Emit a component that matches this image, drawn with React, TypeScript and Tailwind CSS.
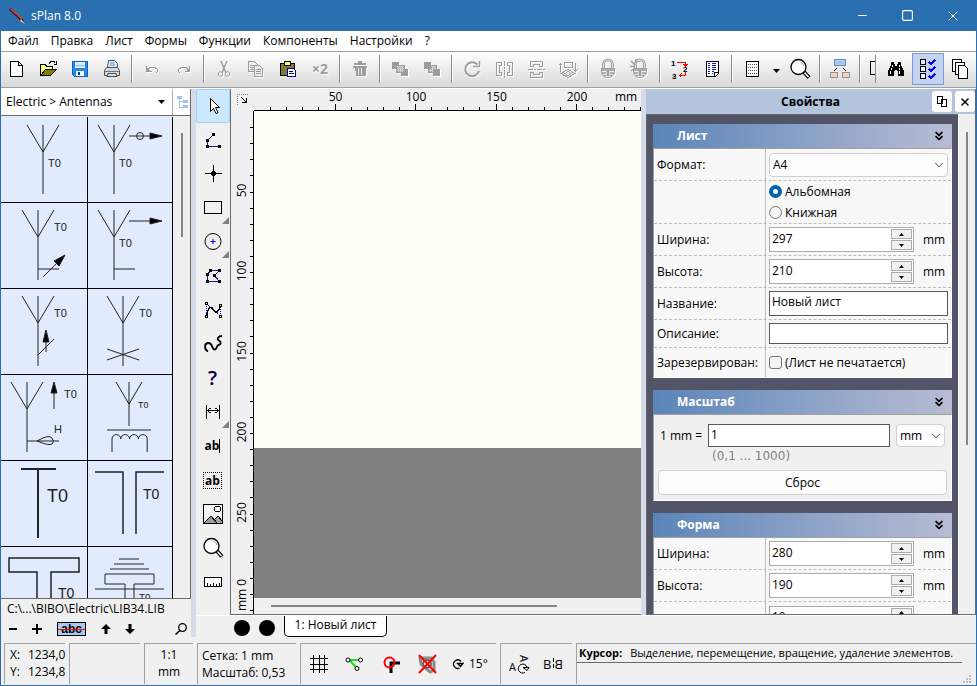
import React from 'react';
import clsx from 'clsx';
import { ChevronDown, ChevronsDown, Minus, Square, X } from 'lucide-react';

interface IconProps {
  children: React.ReactNode;
  disabled?: boolean;
  smooth?: boolean;
}

const Icon = ({ children, disabled, smooth }: IconProps) => (
  <svg
    width="24"
    height="24"
    viewBox="0 0 24 24"
    fill="none"
    stroke="currentColor"
    shapeRendering={smooth ? 'auto' : 'crispEdges'}
    className={clsx('shrink-0', disabled ? 'text-[#9c9c9c] drop-shadow-[1px_1px_0_#ffffff]' : 'text-black')}
  >
    {children}
  </svg>
);

const MagnifierIcon = () => (
  <Icon smooth>
    <path d="M16 15l5 5.500" strokeWidth="4" />
    <path d="M16.500 15.500l4 4.500" stroke="#fff" strokeWidth="1.500" />
    <circle cx="10.500" cy="10" r="7.500" fill="#fff" strokeWidth="1.300" />
    <path d="M12.500 5.500c2 .5 3 1.500 3 3.500" stroke="#999" />
  </Icon>
);

interface Tool {
  name: string;
  icon?: React.ReactNode;
  active?: boolean;
  narrow?: boolean;
  more?: boolean;
}

const lockBody = (
  <>
    <path d="M7.500 12V7.500a4.500 4.500 0 0 1 9 0V12" strokeWidth="3" />
    <path d="M7.500 12V7.500a4.500 4.500 0 0 1 9 0V12" stroke="#eee" />
    <path d="M5.500 11.500h13v4a6.500 5 0 0 1-13 0z" fill="#eee" />
    <path d="M6 13h12M6 16h4M14 16h4M8 18.500h2M14 18.500h2" strokeWidth="1.500" />
    <path d="M12 13v6" strokeWidth="2.500" />
  </>
);

const toolGroups: Tool[][] = [
  [
    { name: 'Новый', icon: <Icon><path d="M6.500 4.500h8l4 4v11h-12zM14.500 4.500v4h4" fill="#fff" /></Icon> },
    {
      name: 'Открыть',
      icon: (
        <Icon>
          <path d="M4.500 18.500v-11h5l1 2h6v3" fill="#ffff80" />
          <path d="M4.500 18.500l5-6h11l-6 6z" fill="#808000" />
          <path d="M13 6.500l2-2h3l1.500 2M20.500 4v3h-3" />
        </Icon>
      ),
    },
    {
      name: 'Сохранить',
      icon: (
        <Icon>
          <path d="M4.500 4.500h15v15h-13l-2-2z" fill="#1e88e5" stroke="#0b62c4" />
          <path d="M7 5h10v6H7z" fill="#dbeafe" stroke="none" />
          <path d="M7 8.500h10" stroke="#8fbde9" />
          <path d="M8 14h8v5H8z" fill="#fff" stroke="none" />
          <path d="M10 15h2v3h-2z" fill="#0b3c9b" stroke="none" />
        </Icon>
      ),
    },
    {
      name: 'Печать',
      icon: (
        <Icon smooth>
          <path d="M7.500 10.500l1-7h6l3 3v4" fill="#cfe6fb" stroke="#555" />
          <path d="M10 6h4M10 8h5" stroke="#5aa0dc" />
          <path d="M4.500 18.500v-5l2-3h11l2 3v5z" fill="#d9d9d9" stroke="#555" />
          <path d="M5 14.500h14" stroke="#777" />
          <path d="M8 16.500h8l1 3H7z" fill="#cfe6fb" stroke="#444" />
        </Icon>
      ),
    },
  ],
  [
    {
      name: 'Отменить',
      icon: <Icon disabled><path d="M6.500 9v5h5M7 13.500l3-3h5l2.500 2v2l-1.500 1.500" /><path d="M6 10v4h4z" fill="currentColor" stroke="none" /></Icon>,
    },
    {
      name: 'Вернуть',
      icon: (
        <Icon disabled>
          <path d="M17.500 9v5h-5M17 13.500l-3-3H9l-2.500 2v2L8 16" />
          <path d="M18 10v4h-4z" fill="currentColor" stroke="none" />
        </Icon>
      ),
    },
  ],
  [
    {
      name: 'Вырезать',
      icon: (
        <Icon disabled smooth>
          <path d="M9 4l5 12M15 4l-5 12" strokeWidth="1.500" />
          <circle cx="8.500" cy="17" r="2.300" />
          <circle cx="15.500" cy="17" r="2.300" />
        </Icon>
      ),
    },
    {
      name: 'Копировать',
      icon: (
        <Icon disabled>
          <path d="M4.500 4.500h6l3 3v7h-9z" fill="#eee" />
          <path d="M6 8.500h5M6 10.500h5M6 12.500h5" />
          <path d="M10.500 8.500h5l3 3v8h-8z" fill="#eee" />
          <path d="M12 12.500h5M12 14.500h5M12 16.500h5" />
        </Icon>
      ),
    },
    {
      name: 'Вставить',
      icon: (
        <Icon>
          <path d="M4.500 6.500h14v12h-14z" fill="#7d7b35" />
          <path d="M8.500 4.500h6v4h-6z" fill="#ffff66" />
          <path d="M11.500 11.500h6l2 2v6h-8z" fill="#fff" stroke="#000080" />
          <path d="M13 14.500h4M13 16.500h5" stroke="#000080" />
        </Icon>
      ),
    },
    {
      name: 'Дублировать',
      icon: <span className="text-[14px] font-bold text-[#9c9c9c] [text-shadow:1px_1px_0_#fff]">×2</span>,
    },
  ],
  [
    {
      name: 'Удалить',
      icon: (
        <Icon disabled>
          <path d="M10 4.500h4M6 6.500h12" strokeWidth="2" />
          <path d="M7 9h11v10H8z" fill="currentColor" stroke="none" />
          <path d="M10.500 10v8M13.500 10v8" stroke="#eee" />
          <path d="M5 9.500h14" strokeWidth="2" />
        </Icon>
      ),
    },
  ],
  [
    {
      name: 'На передний план',
      icon: (
        <Icon disabled>
          <path d="M4 5h7v7H4zM13 12h7v7h-7z" fill="currentColor" stroke="none" />
          <path d="M8.500 8.500h8v7h-8z" fill="#d4d4d4" />
          <path d="M9 10.500h7M9 12.500h7M9 14.500h7" strokeDasharray="1 1" />
        </Icon>
      ),
    },
    {
      name: 'На задний план',
      icon: (
        <Icon disabled>
          <path d="M8.500 8.500h8v7h-8z" fill="#d4d4d4" />
          <path d="M9 10.500h7M9 12.500h7M9 14.500h7" strokeDasharray="1 1" />
          <path d="M4 5h7v7H4zM13 12h7v7h-7z" fill="currentColor" stroke="none" />
        </Icon>
      ),
    },
  ],
  [
    {
      name: 'Повернуть',
      icon: (
        <Icon disabled smooth>
          <path d="M17.500 7.500A7 7 0 1 0 19 14" strokeWidth="2" />
          <path d="M13 9.500h6.500V4" strokeWidth="1.500" />
        </Icon>
      ),
    },
    {
      name: 'Отразить горизонтально',
      icon: (
        <Icon disabled>
          <path d="M4.500 5.500h5v3h-2v7h2v3h-5zM20.500 5.500h-5v3h2v7h-2v3h5z" />
          <path d="M12.500 4v17" strokeDasharray="5 1 2 1" />
        </Icon>
      ),
    },
    {
      name: 'Отразить вертикально',
      icon: (
        <Icon disabled>
          <path d="M6.500 4.500h12v5h-3v-2h-6v2h-3zM6.500 20.500h12v-5h-3v2h-6v-2h-3z" />
          <path d="M4 12.500h17" strokeDasharray="5 1 2 1" />
        </Icon>
      ),
    },
    {
      name: 'Развернуть',
      icon: (
        <Icon disabled>
          <path d="M4.500 15V6M2.500 8.500l2-2 2 2M19.500 6v9M17.500 12.500l2 2 2-2" />
          <path d="M8.500 5.500h8v5h-8zM5 16.500l7-4 7 4-7 4z" />
          <path d="M9 16.500l3-2 3 2-3 2z" />
        </Icon>
      ),
    },
  ],
  [
    { name: 'Заблокировать', icon: <Icon disabled smooth>{lockBody}</Icon> },
    {
      name: 'Разблокировать',
      icon: <Icon disabled smooth>{lockBody}<path d="M2 9.500h4M3 4l4 4M8 2v4M3 14l3-2" strokeWidth="1.500" /></Icon>,
    },
  ],
  [
    {
      name: 'Нумерация',
      icon: (
        <Icon>
          <path d="M9 5.500h8.500V9M15.500 7l2 2 2-2" stroke="#f00" />
          <path d="M17.500 15v3.500h-6M13.500 16.500l-2 2 2 2" stroke="#f00" />
          <g fontFamily="Liberation Sans, sans-serif" fontSize="8" fontWeight="bold" fill="#000" stroke="none">
            <text x="3" y="9">1</text>
            <text x="15" y="15">2</text>
            <text x="4" y="22">3</text>
          </g>
        </Icon>
      ),
    },
    {
      name: 'Список',
      icon: (
        <Icon>
          <path d="M6.500 4.500h12v12l-3 3h-9z" fill="#fff" />
          <path d="M14.500 19v-3.500H18" />
          <path d="M8 6.500h2M8 8.500h2M8 10.500h2M8 12.500h2M8 14.500h2M8 16.500h2" stroke="#1616b8" />
          <path d="M12 6.500h4M12 8.500h4M12 10.500h4M12 12.500h4M12 14.500h2M12 16.500h1" stroke="#1616b8" />
        </Icon>
      ),
    },
  ],
  [
    {
      name: 'Сетка',
      icon: (
        <Icon>
          <path d="M6.500 4.500h12v15h-12z" fill="#fff" />
          <path d="M8 7.500h9M8 10.500h9M8 13.500h9M8 16.500h9" stroke="#555" strokeDasharray="1 1" />
        </Icon>
      ),
    },
    {
      name: 'Шаг сетки',
      narrow: true,
      icon: <svg width="7" height="4" viewBox="0 0 7 4" className="mt-1"><path d="M0 0h7L3.500 4z" /></svg>,
    },
    { name: 'Масштаб', icon: <MagnifierIcon /> },
  ],
  [
    {
      name: 'Структура',
      icon: (
        <Icon>
          <path d="M6.500 2.500h11v6h-11z" fill="#a6caf0" stroke="#6b8db3" />
          <path d="M9 11l-3 3M15 11l3 3" />
          <path d="M2.500 15.500h7v5h-7zM14.500 15.500h7v5h-7z" fill="#f0d0c0" stroke="#9a8f8a" />
        </Icon>
      ),
    },
  ],
];

const rightTools: Tool[] = [
  {
    name: 'Поиск',
    icon: (
      <Icon>
        <path
          d="M7 5h3v2h1v2h2V7h1V5h3v3l3 6v5h-6v-5h-1v-1h-2v1h-1v5H4v-5l3-6z"
          fill="currentColor"
          stroke="none"
        />
        <path d="M8.500 8v2M7.500 11v2M6.500 14v3M15.500 8v2M15.500 11v2M15.500 14v3" stroke="#fff" />
      </Icon>
    ),
  },
  {
    name: 'Свойства',
    active: true,
    icon: (
      <Icon>
        <path d="M4.500 2.500h5v5h-5zM4.500 9.500h5v5h-5zM4.500 16.500h5v5h-5z" fill="#e8eefc" />
        <path d="M13 5l2 2 4-4M13 12l2 2 4-4M13 19l2 2 4-4" stroke="#00f" strokeWidth="2" />
      </Icon>
    ),
  },
  {
    name: 'Листы',
    icon: (
      <Icon>
        <path d="M4.500 2.500h9v12h-9z" fill="#fff" />
        <path d="M7.500 5.500h9v12h-9z" fill="#fff" />
        <path d="M10.500 8.500h6l3 3v10h-9z" fill="#fff" />
      </Icon>
    ),
  },
];

const ToolButton = ({ name, icon, active, narrow }: Tool) => (
  <button
    aria-label={name}
    className={clsx(
      'flex h-8 shrink-0 items-center justify-center border',
      narrow ? 'w-4' : 'w-8',
      active ? 'border-[#7b9ad8] bg-[#c4d3ef]' : 'border-transparent'
    )}
  >
    {icon}
  </button>
);

const Separator = () => <div className="mx-[3px] mt-[2px] h-7 w-[2px] shrink-0 border-l border-[#8b8b8b] bg-white" />;

const dot = (x: number, y: number) => <rect key={`${x}-${y}`} x={x - 1.5} y={y - 1.5} width="3" height="3" fill="#000" stroke="none" />;

const drawingTools: Tool[] = [
  {
    name: 'Выделение',
    active: true,
    icon: <Icon smooth><path d="M9.500 4.500v13l3-3 2.500 5 2-1-2.500-5h4z" fill="#fff" /></Icon>,
  },
  {
    name: 'Линия',
    icon: <Icon><path d="M12.500 6.500l-6 6v6h12" stroke="#1c1c8c" />{dot(12.5, 6.5)}{dot(6.5, 12.5)}{dot(6.5, 18.5)}{dot(18.5, 18.5)}</Icon>,
  },
  { name: 'Узел', icon: <Icon><path d="M4 11.500h17M12.500 3v17" /><circle cx="12.500" cy="11.500" r="2" fill="#000" /></Icon> },
  { name: 'Прямоугольник', more: true, icon: <Icon><path d="M3.500 5.500h17v12h-17z" /></Icon> },
  {
    name: 'Окружность',
    more: true,
    icon: <Icon smooth><circle cx="12" cy="11.500" r="8" /><path d="M12 9v5M9.500 11.500h5" stroke="#00f" /></Icon>,
  },
  {
    name: 'Многоугольник',
    icon: (
      <Icon>
        <path d="M9.500 6.500h9l-5 5 5 6h-12v-7z" stroke="#1c1c8c" />
        {dot(9.5, 6.5)}{dot(18.5, 6.5)}{dot(13.5, 11.5)}{dot(18.5, 17.5)}{dot(6.5, 17.5)}{dot(6.5, 10.5)}
      </Icon>
    ),
  },
  {
    name: 'Кривая',
    icon: (
      <Icon>
        <path d="M5.500 6v12M5.500 5.500l14 12M19.500 7v11" stroke="#00f" strokeDasharray="1 1" />
        <path d="M5.500 18c2-10 5-10 7-6s5 2 7-4" strokeWidth="1.500" />
        <path d="M4.500 4.500h2v2h-2zM4.500 17.500h2v2h-2zM18.500 6.500h2v2h-2zM18.500 17.500h2v2h-2z" fill="#fff" />
      </Icon>
    ),
  },
  {
    name: 'От руки',
    icon: <Icon smooth><path d="M7 19.500C3 17.500 3 11 7.500 11s3 6.500 6 6.500 1.500-4 4-4.500 3-3 .5-4.500S17 4 21 4" strokeWidth="1.800" /></Icon>,
  },
  { name: 'Специальная форма', icon: <span className="text-[20px] font-semibold leading-none text-[#000040]">?</span> },
  {
    name: 'Размер',
    more: true,
    icon: <Icon><path d="M5.500 5v14M18.500 5v14M7 10.500h11M9.500 8l-3 2.500 3 2.500M14.500 8l3 2.500-3 2.500" /></Icon>,
  },
  {
    name: 'Текст',
    icon: <span className="border-r border-black text-[12px] font-bold leading-[14px]">ab</span>,
  },
  {
    name: 'Текстовый блок',
    icon: <span className="border border-dotted border-black px-px text-[12px] font-bold leading-[15px]">ab</span>,
  },
  {
    name: 'Рисунок',
    icon: (
      <Icon>
        <path d="M2.500 2.500h19v19h-19z" fill="#f4f4f4" />
        <path d="M3 21l7-7 4 4 3-4 4 4v3z" fill="#a0a0a0" stroke="none" />
        <path d="M3 21l7-7 6 7M14 17l3-3 4 5" />
        <circle cx="16.500" cy="7" r="3" fill="#fff" />
      </Icon>
    ),
  },
  { name: 'Лупа', icon: <MagnifierIcon /> },
  {
    name: 'Линейка',
    icon: <Icon><path d="M3.500 7.500h17v9h-17z" fill="#fff" /><path d="M6.500 16v-3M9.500 16v-2M12.500 16v-3M15.500 16v-2M18.500 16v-3" /></Icon>,
  },
];

const T0 = ({ x, y, size = 11, text = 'T0' }: { x: number; y: number; size?: number; text?: string }) => (
  <text x={x} y={y} fontSize={size} fill="#222" stroke="none">{text}</text>
);

const antennas = [
  <><path d="M26 8l16 27 16-27M42 8v69" /><T0 x={47} y={50} /></>,
  <>
    <path d="M10 8l16 27L42 8M26 8v69M41 19h22" /><circle cx="52" cy="19" r="3.500" />
    <path d="M62 16l12 3-12 3z" fill="#000" /><T0 x={31} y={50} />
  </>,
  <>
    <path d="M21 7l16 27L53 7M37 7v70M37 66h21M42 74l18-18" />
    <path d="M64 52l-11 6 5 5z" fill="#000" /><T0 x={53} y={28} />
  </>,
  <><path d="M10 7l16 27L42 7M26 7v70M41 18h22M26 66h21" /><path d="M62 15l12 3-12 3z" fill="#000" /><T0 x={31} y={44} /></>,
  <><path d="M21 7l16 27L53 7M37 7v70M37 66l16-16M45 63V50" /><path d="M42 53l3-12 3 12z" fill="#000" /><T0 x={53} y={28} /></>,
  <><path d="M19 7l16 27L51 7M35 7v70M19 60l32 11M19 71l32-11" /><T0 x={51} y={28} /></>,
  <>
    <path d="M10 7l16 27L42 7M26 7v70M53 34V17M26 66h32M36 66q12-7 15-3t0 6-15-3" />
    <path d="M50 18l3-11 3 11z" fill="#000" /><T0 x={63} y={23} /><T0 x={53} y={58} text="H" />
  </>,
  <>
    <path d="M28 7l13 22L54 7M41 7v44M19 55h44M24 77V64a4.400 4.400 0 0 1 8.800 0 4.400 4.400 0 0 1 8.800 0 4.400 4.400 0 0 1 8.800 0 4.400 4.400 0 0 1 8.800 0v13" />
    <T0 x={50} y={33} size={9} />
  </>,
  <><path d="M20 8h35M37 8v69" strokeWidth="2" /><T0 x={46} y={41} size={18} /></>,
  <><path d="M7 11h28v62M76 11H48v62" strokeWidth="1.500" /><T0 x={55} y={38} size={14} /></>,
  <><path d="M36 70V25H8V11h70v14H50v45" strokeWidth="1.500" /><T0 x={57} y={51} size={14} /></>,
  <><path d="M31 12h20M26 17h30M22 22h39M37 70V37H17V27h49v10H46v33M7 42h69" /><T0 x={51} y={55} size={10} /></>,
];

const LibraryPanel = () => (
  <aside className="flex w-[190px] shrink-0 flex-col">
    <div className="flex min-h-0 flex-1 flex-col border-b border-r border-[#6b6b6b]">
      <div className="flex h-[27px] shrink-0 border-b border-[#6b6b6b] bg-white">
        <button className="flex flex-1 items-center justify-between border-r border-[#b0b0b0] pl-[5px] pr-[7px]">
          Electric &gt; Antennas
          <svg width="7" height="4" viewBox="0 0 7 4"><path d="M0 0h7L3.500 4z" /></svg>
        </button>
        <button aria-label="Дерево библиотек" className="flex w-[17px] items-center justify-center">
          <svg width="12" height="14" viewBox="0 0 12 14" shapeRendering="crispEdges">
            <path d="M1 1h5v3H1zM7 5h5v3H7zM7 10h5v3H7z" fill="#9fc3e6" />
            <path d="M3.500 4v8H7M3.500 6.500H7" fill="none" stroke="#9fc3e6" />
          </svg>
        </button>
      </div>
      <div className="flex min-h-0 flex-1">
        <div className="grid flex-1 grid-cols-[87px_1fr] content-start overflow-hidden bg-[#e2ebfd] pt-px">
          {antennas.map((shape, i) => (
            <button key={i} aria-label={`Антенна ${i + 1}`} className="h-[86px] overflow-hidden border-b border-r border-black">
              <svg width="85" height="85" viewBox="0 0 85 85" fill="none" stroke="#222" fontFamily="Liberation Sans, sans-serif" className="block">
                {shape}
              </svg>
            </button>
          ))}
        </div>
        <div className="w-[17px] px-2 pt-[17px]">
          <div className="h-[104px] w-[2px] bg-[#858585]" />
        </div>
      </div>
    </div>
    <div className="h-[19px] shrink-0 pl-[6px] leading-[19px]">C:\...\BIBO\Electric\LIB34.LIB</div>
    <div className="flex h-[23px] shrink-0 items-center pb-px">
      <button aria-label="Уменьшить" className="flex w-6 justify-center"><svg width="9" height="9"><path d="M0 4h8" stroke="#000" strokeWidth="2" /></svg></button>
      <button aria-label="Увеличить" className="flex w-6 justify-center"><svg width="10" height="10"><path d="M0 5h10M5 0v10" stroke="#000" strokeWidth="2" /></svg></button>
      <button className="mx-2 h-[14px] w-[29px] border border-black bg-[#a6caf0] text-[12px] font-bold leading-[11px] [font-family:'Liberation_Sans',sans-serif]">
        <s className="decoration-[#ff0000] decoration-1">&nbsp;abc&nbsp;</s>
      </button>
      <button aria-label="Вверх" className="flex w-6 justify-center"><svg width="10" height="10" viewBox="0 0 10 10"><path d="M5 0l5 5H6.500v5h-3V5H0z" /></svg></button>
      <button aria-label="Вниз" className="flex w-6 justify-center"><svg width="10" height="10" viewBox="0 0 10 10"><path d="M5 10L0 5h3.500V0h3v5H10z" /></svg></button>
      <button aria-label="Найти" className="ml-auto mr-1">
        <svg width="12" height="12" viewBox="0 0 12 12" fill="none" stroke="#000"><circle cx="7.500" cy="4.500" r="3.800" strokeWidth="1.300" /><path d="M5 7.500L.5 11.500" strokeWidth="1.500" /></svg>
      </button>
    </div>
  </aside>
);

// 10 mm on the sheet, in screen pixels
const STEP = 16.1;
const ticks = Array.from({ length: 60 }, (_, i) => i + 1);

const Workspace = () => (
  <section className="flex min-w-0 flex-1 flex-col border-b border-l border-[#6b6b6b]">
    <div className="flex h-[22px] shrink-0">
      <svg width="23" height="22" viewBox="0 0 23 22" fill="none" stroke="#000" shapeRendering="crispEdges" className="shrink-0">
        <path d="M6 5.500h12M6.500 5v12" stroke="#888" strokeDasharray="1 1" />
        <path d="M10 8l5 5M11 13.500h4.500V9" />
      </svg>
      <svg height="22" className="min-w-0 flex-1 overflow-hidden" fontSize="12">
        <path d="M0 21.500h2000" stroke="#000" />
        {ticks.map((i) => (
          <rect key={i} x={Math.round(i * STEP)} y={i % 5 ? 18 : 15} width="1" height={i % 5 ? 3 : 6} />
        ))}
        {[50, 100, 150, 200].map((mm) => (
          <text key={mm} x={(mm / 10) * STEP + 1} y="12" textAnchor="middle">{mm}</text>
        ))}
      </svg>
      <span className="-ml-[26px] h-[17px] w-[26px] bg-[#f0f0f0] leading-[16px]">mm</span>
    </div>
    <div className="flex min-h-0 flex-1">
      <svg width="23" className="h-full shrink-0 overflow-hidden" fontSize="12">
        <path d="M22.500 0v2000" stroke="#000" />
        {ticks.map((i) => <rect key={i} x="19" y={Math.round(i * STEP)} width="3" height="1" />)}
        {[50, 100, 150, 200, 250].map((mm) => (
          <text key={mm} transform={`translate(15 ${(mm / 10) * STEP - 1}) rotate(-90)`} textAnchor="middle">{mm}</text>
        ))}
        <text transform="translate(15 500) rotate(-90)">mm 0</text>
      </svg>
      <div className="flex min-w-0 flex-1 flex-col">
        <div className="h-[337px] shrink-0 bg-[#fffff6]" />
        <div className="min-h-0 flex-1 bg-[#808080]" />
        <div className="flex h-4 shrink-0 items-center px-[17px]">
          <div className="h-[2px] w-[81%] bg-[#858585]" />
        </div>
      </div>
    </div>
  </section>
);

const Card = ({ title, children }: { title: string; children: React.ReactNode }) => (
  <section className="mb-3 shrink-0">
    <h2 className="flex h-6 items-center justify-between bg-linear-to-r from-[#5b85b9] to-[#b8bcd3] pl-6 pr-[6px] font-bold text-white">
      {title}
      <button aria-label={`Свернуть: ${title}`}><ChevronsDown size={14} strokeWidth={3} className="text-black" /></button>
    </h2>
    <div className="border border-b-white border-l-[#a0a0a0] border-r-white border-t-[#a0a0a0]">{children}</div>
  </section>
);

interface RowProps {
  label?: string;
  id?: string;
  className?: string;
  children: React.ReactNode;
}

const Row = ({ label, id, className = 'h-8', children }: RowProps) => (
  <div className={clsx('flex border-b border-dashed border-[#bdbdbd] bg-[#f8f8f8] last:border-b-0', className)}>
    <label htmlFor={id} className="flex w-28 shrink-0 items-center border-r border-[#bdbdbd] pl-[3px]">{label}</label>
    <div className="flex min-w-0 flex-1 items-center pl-[3px] pr-[3px]">{children}</div>
  </div>
);

const SpinRow = ({ label, id, value }: { label: string; id: string; value: string }) => (
  <Row label={label} id={id}>
    <div className="flex h-[25px] w-[145px] border border-[#acacac] bg-white p-px">
      <input id={id} defaultValue={value} className="h-5 min-w-0 flex-1 pb-[2px] pl-px outline-none" />
      <div className="flex w-[21px] flex-col gap-px">
        {['M0 3h5L2.500 0z', 'M0 0h5L2.500 3z'].map((d, i) => (
          <button key={d} aria-label={i ? `${label} меньше` : `${label} больше`} className="flex flex-1 items-center justify-center border border-[#acacac] bg-[#f0f0f0]">
            <svg width="5" height="3" viewBox="0 0 5 3"><path d={d} /></svg>
          </button>
        ))}
      </div>
    </div>
    <span className="ml-[9px]">mm</span>
  </Row>
);

const SelectBox = ({ id, value, label, className }: { id: string; value: string; label?: string; className: string }) => (
  <div className={clsx('relative', className)}>
    <select id={id} aria-label={label} className="h-full w-full appearance-none rounded-sm border border-[#d0d0d0] bg-[#fdfdfd] pl-[3px] outline-none">
      <option>{value}</option>
    </select>
    <ChevronDown size={14} strokeWidth={1.5} className="pointer-events-none absolute right-[2px] top-[5px] text-[#333]" />
  </div>
);

const radioClass =
  'mr-[3px] size-[13px] appearance-none rounded-full border border-[#767676] bg-[#f4f4f4] checked:border-4 checked:border-[#0063b1] checked:bg-white';
const textClass = 'h-[25px] w-full border border-[#5a5a5a] bg-white px-[2px] pb-1 outline-none';

const PropertiesPanel = () => (
  <aside className="flex w-[330px] shrink-0 flex-col border-b border-r border-[#6b6b6b]">
    <header className="flex h-[25px] shrink-0 items-center gap-[3px] bg-[#b3c5dd]">
      <h1 className="flex-1 pl-[46px] text-center font-bold">Свойства</h1>
      <button aria-label="Открепить" className="flex h-[21px] w-5 items-center justify-center rounded-[3px] bg-[#fdfdfd]">
        <svg width="11" height="12" viewBox="0 0 11 12" fill="#fff" stroke="#000" shapeRendering="crispEdges"><path d="M.5.5h5v7h-5zM4.500 3.500h5v7h-5z" /></svg>
      </button>
      <button aria-label="Закрыть панель" className="flex h-[21px] w-5 items-center justify-center rounded-[3px] bg-[#fdfdfd]">
        <X size={12} strokeWidth={3} />
      </button>
    </header>
    <div className="flex min-h-0 flex-1">
      <div className="flex min-w-0 flex-1 flex-col overflow-hidden border-l border-t border-[#6b6b6b] bg-[#525468] px-[6px] pt-[9px]">
        <Card title="Лист">
          <Row label="Формат:" id="format">
            <SelectBox id="format" value="A4" className="h-6 w-full" />
          </Row>
          <Row className="h-[43px]">
            <div className="flex flex-col gap-[3px]">
              <label className="flex h-[18px] items-center"><input type="radio" name="orientation" defaultChecked className={radioClass} />Альбомная</label>
              <label className="flex h-[18px] items-center"><input type="radio" name="orientation" className={radioClass} />Книжная</label>
            </div>
          </Row>
          <SpinRow label="Ширина:" id="sheet-width" value="297" />
          <SpinRow label="Высота:" id="sheet-height" value="210" />
          <Row label="Название:" id="sheet-name"><input id="sheet-name" defaultValue="Новый лист" className={textClass} /></Row>
          <Row label="Описание:" id="sheet-description" className="h-[28px]">
            <input id="sheet-description" className="h-[21px] w-full border border-[#5a5a5a] bg-white px-[2px] outline-none" />
          </Row>
          <Row label="Зарезервирован:" className="h-[29px]">
            <label className="flex items-center">
              <input type="checkbox" className="mr-[3px] size-[13px] appearance-none rounded-[3px] border border-[#767676] bg-[#f4f4f4]" />
              (Лист не печатается)
            </label>
          </Row>
        </Card>
        <Card title="Масштаб">
          <div className="bg-[#f0f0f0] px-1 pb-[5px] pt-[9px]">
            <div className="flex items-center">
              <label htmlFor="scale" className="w-[50px] shrink-0 pl-[2px]">1 mm =</label>
              <input id="scale" defaultValue="1" className="h-[23px] min-w-0 flex-1 border border-[#5a5a5a] bg-white px-[2px] pb-[3px] outline-none" />
              <SelectBox id="scale-unit" label="Единица" value="mm" className="ml-[6px] mr-[2px] h-[23px] w-[49px]" />
            </div>
            <div className="pl-[54px] leading-[19px] text-[#838383] [font-family:'DejaVu_Sans',sans-serif]">(0,1 ... 1000)</div>
            <button className="mt-1 h-[25px] w-full rounded-[4px] border border-[#d0d0d0] bg-[#fdfdfd]">Сброс</button>
          </div>
        </Card>
        <Card title="Форма">
          <SpinRow label="Ширина:" id="form-width" value="280" />
          <SpinRow label="Высота:" id="form-height" value="190" />
          <SpinRow label="" id="form-margin" value="10" />
        </Card>
      </div>
      <div className="w-[17px] border-l border-white pl-[7px] pt-[18px]">
        <div className="h-[313px] w-[2px] bg-[#858585]" />
      </div>
    </div>
  </aside>
);

const Pane = ({ className, children }: { className: string; children?: React.ReactNode }) => (
  <div className={clsx('h-[41px] border-l border-t border-[#a0a0a0]', className)}>{children}</div>
);

const StatusBar = () => (
  <footer className="flex h-[44px] shrink-0 gap-1 pl-[3px] pt-[2px]">
    <Pane className="w-[61px] pl-[5px] pt-[2px]">
      <div className="grid grid-cols-[18px_auto] leading-[17px]"><span>X:</span><span>1234,0</span><span>Y:</span><span>1234,8</span></div>
    </Pane>
    <Pane className="w-[71px]" />
    <Pane className="w-[49px] pt-[2px] text-center leading-[17px]"><div>1:1</div><div>mm</div></Pane>
    <Pane className="w-[99px] pl-1 pt-[3px] leading-[17px]"><div>Сетка: 1 mm</div><div>Масштаб: 0,53</div></Pane>
    <Pane className="flex w-[196px] items-center gap-3 pl-[6px]">
      <button aria-label="Привязка к сетке"><Icon><path d="M3 6.500h18M3 12.500h18M3 17.500h18M6.500 3v18M12.500 3v18M17.500 3v18" /></Icon></button>
      <button aria-label="Резиновые связи">
        <Icon smooth><path d="M15 8H6l7 7" stroke="#1fdc1f" strokeWidth="2" /><circle cx="5" cy="8" r="2" fill="#fff" /><circle cx="17.500" cy="8" r="2" fill="#fff" /><circle cx="14" cy="16.500" r="2" fill="#fff" /></Icon>
      </button>
      <button aria-label="Захват узла">
        <Icon smooth><path d="M21 11h-9v10" strokeWidth="3" /><circle cx="10.500" cy="10.500" r="5" stroke="#f00" strokeWidth="2" /></Icon>
      </button>
      <button aria-label="Без соединения">
        <Icon smooth><path d="M5 6h11l3 4v8l-4 2-9-8z" stroke="#8c8c8c" strokeWidth="3" /><circle cx="12" cy="12" r="4" stroke="#666" strokeWidth="2" /><path d="M4 3l17 18M21 3L4 21" stroke="#f00" strokeWidth="2" /></Icon>
      </button>
      <button className="ml-px flex items-center gap-[5px]">
        <svg width="12" height="12" viewBox="0 0 12 12" fill="none" stroke="#000" strokeWidth="1.300"><path d="M9 3.500A4.200 4.200 0 1 0 7.500 10M5.500 5.500h5.500L8.500 8.500z" /></svg>
        15°
      </button>
    </Pane>
    <Pane className="flex w-[72px] items-center gap-3 pl-2">
      <button aria-label="Поворот текста">
        <svg width="21" height="22" viewBox="0 0 21 22" fill="none" stroke="#000">
          <text x="0" y="18" fontSize="11" fill="#000" stroke="none">A</text>
          <text transform="translate(11 2) rotate(90)" fontSize="11" fill="#000" stroke="none">A</text>
          <path d="M18 14a4.500 4.500 0 1 0-2 5.500M14 14.500h6l-2 3z" />
        </svg>
      </button>
      <button aria-label="Отражение текста">
        <svg width="22" height="16" viewBox="0 0 22 16" stroke="#000">
          <text x="1" y="13" fontSize="13" stroke="none">B</text>
          <path d="M11.500 2v12" strokeDasharray="4 2" />
          <text transform="translate(21 13) scale(-1 1)" fontSize="13" stroke="none">B</text>
        </svg>
      </button>
    </Pane>
    <Pane className="flex min-w-0 flex-1 flex-col">
      <p className="mr-[14px] flex h-[19px] items-center gap-2 whitespace-nowrap border-b border-[#6b6b6b] pl-[2px] text-[11px]">
        <b>Курсор:</b>Выделение, перемещение, вращение, удаление элементов.
      </p>
      <svg width="9" height="9" viewBox="0 0 9 9" fill="#bdbdbd" className="ml-auto mr-1 mt-auto">
        <path d="M6 0h2v2H6zM3 3h2v2H3zM6 3h2v2H6zM0 6h2v2H0zM3 6h2v2H3zM6 6h2v2H6z" />
      </svg>
    </Pane>
  </footer>
);

const menu = ['Файл', 'Правка', 'Лист', 'Формы', 'Функции', 'Компоненты', 'Настройки', '?'];

const App = () => (
  <div className="flex h-screen flex-col overflow-hidden border-x border-b border-[#2a70b1] bg-[#f0f0f0] text-[12px] leading-4 text-black [font-family:'Open_Sans','Noto_Sans',sans-serif]">
    <header className="flex h-[31px] shrink-0 items-center bg-[#2a70b1] pl-2 text-white">
      <svg width="17" height="16" viewBox="0 0 17 16" className="mr-[5px]">
        <path d="M1 1l13 12" stroke="#4a1818" strokeWidth="3" />
        <path d="M2 1l11 10" stroke="#d94a35" strokeWidth="1.500" />
        <path d="M12 11l4 5-5-3z" fill="#eac79a" />
      </svg>
      <span className="flex-1">sPlan 8.0</span>
      <button aria-label="Свернуть" className="flex w-[46px] justify-center"><Minus size={13} strokeWidth={2} /></button>
      <button aria-label="Развернуть" className="flex w-[45px] justify-center"><Square size={13} strokeWidth={2} /></button>
      <button aria-label="Закрыть" className="flex w-[46px] justify-center"><X size={16} strokeWidth={1.5} /></button>
    </header>
    <nav className="flex h-5 shrink-0 items-center bg-white pl-px">
      {menu.map((item) => <button key={item} className="px-[6px]">{item}</button>)}
    </nav>
    <div className="flex h-[37px] shrink-0 border-y border-[#a0a0a0] bg-linear-to-b from-white to-[#d9d9d9]">
      <div className="-ml-px flex min-w-0 flex-1 items-start overflow-hidden pt-px">
        {toolGroups.map((group, i) => (
          <React.Fragment key={i}>
            {group.map((tool) => <ToolButton key={tool.name} {...tool} />)}
            <Separator />
          </React.Fragment>
        ))}
        <button aria-label="Ещё" className="ml-[6px] mt-2 h-[14px] w-8 shrink-0 border border-black" />
      </div>
      <div className="flex shrink-0 items-start pt-px">
        <div className="mr-1 mt-[2px] h-7 w-px bg-[#8b8b8b]" />
        {rightTools.map((tool) => <ToolButton key={tool.name} {...tool} />)}
      </div>
    </div>
    <main className="flex min-h-0 flex-1 border-t border-white">
      <LibraryPanel />
      <div className="mb-1 w-[5px] shrink-0 bg-[#d6dbe9]" />
      <div className="flex min-w-0 flex-1 flex-col">
        <div className="flex min-h-0 flex-1">
          <div className="flex w-[34px] shrink-0 flex-col">
            {drawingTools.map((tool) => (
              <button
                key={tool.name}
                aria-label={tool.name}
                className={clsx(
                  'relative flex h-[34px] shrink-0 items-center justify-center border pr-px',
                  tool.active ? 'rounded-[2px] border-[#99d1ff] bg-[#cce8ff]' : 'border-transparent'
                )}
              >
                {tool.icon}
                {tool.more && (
                  <svg width="7" height="7" viewBox="0 0 7 7" fill="#808080" className="absolute bottom-0 right-0"><path d="M7 0v7H0z" /></svg>
                )}
              </button>
            ))}
          </div>
          <Workspace />
          <div className="w-[5px] shrink-0 bg-[#d6dbe9]" />
          <PropertiesPanel />
        </div>
        <div className="flex h-[26px] shrink-0 border-t border-white pl-[38px]">
          <div className="flex items-center gap-[9px] pb-[2px]">
            <button aria-label="Предыдущий лист" className="size-4 rounded-full bg-black" />
            <button aria-label="Следующий лист" className="size-4 rounded-full bg-black" />
          </div>
          <button className="ml-[9px] h-[21px] w-[103px] rounded-b-[5px] border border-t-0 border-black bg-white pb-[2px]">1: Новый лист</button>
        </div>
      </div>
    </main>
    <StatusBar />
  </div>
);

export default App;
